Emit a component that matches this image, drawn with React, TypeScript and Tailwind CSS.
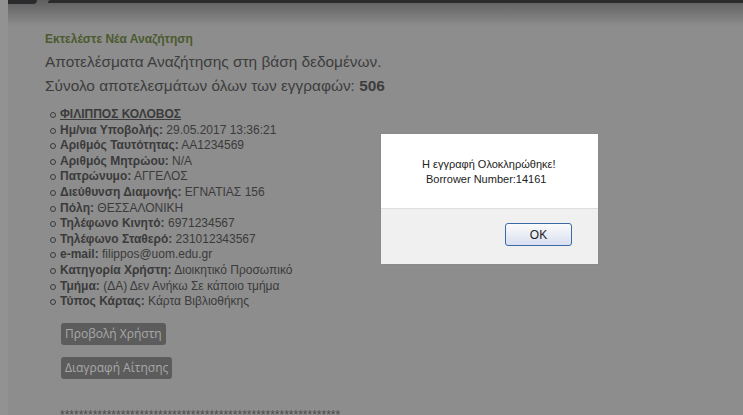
const FIELDS: { label: string; value: string }[] = [
  { label: 'Ημ/νια Υποβολής:', value: '29.05.2017 13:36:21' },
  { label: 'Αριθμός Ταυτότητας:', value: 'ΑΑ1234569' },
  { label: 'Αριθμός Μητρώου:', value: 'N/A' },
  { label: 'Πατρώνυμο:', value: 'ΑΓΓΕΛΟΣ' },
  { label: 'Διεύθυνση Διαμονής:', value: 'ΕΓΝΑΤΙΑΣ 156' },
  { label: 'Πόλη:', value: 'ΘΕΣΣΑΛΟΝΙΚΗ' },
  { label: 'Τηλέφωνο Κινητό:', value: '6971234567' },
  { label: 'Τηλέφωνο Σταθερό:', value: '231012343567' },
  { label: 'e-mail:', value: 'filippos@uom.edu.gr' },
  { label: 'Κατηγορία Χρήστη:', value: 'Διοικητικό Προσωπικό' },
  { label: 'Τμήμα:', value: '(ΔΑ) Δεν Ανήκω Σε κάποιο τμήμα' },
  { label: 'Τύπος Κάρτας:', value: 'Κάρτα Βιβλιοθήκης' },
];

function Bullet() {
  return <span className="mt-[5px] mr-[4px] w-[6px] h-[6px] rounded-full border border-[#3a3a3a] shrink-0" />;
}

export default function App() {
  return (
    <div className="relative w-[743px] h-[415px] overflow-hidden bg-[#8d8d8d] text-[#3b3b3b] font-['Liberation_Sans',Arial,sans-serif]">
      {/* top nav edge + shadow */}
      <div className="absolute inset-x-0 top-0 h-[26px] bg-gradient-to-b from-[#5f5f5f] to-[#8d8d8d]" />
      <div className="absolute left-0 top-0 w-[37px] h-[4px] bg-[#2b2b2d] rounded-br-[4px]" />
      <div className="absolute left-[48px] right-0 top-0 h-[3px] bg-[#2b2b2d] rounded-tl-[3px]" />
      <div className="absolute left-0 top-0 bottom-0 w-[8px] bg-[#929292]" />

      <div className="relative pl-[45px] pt-[32px]">
        <div className="text-[12px] font-bold text-[#4b5a2d] leading-[14px]">Εκτελέστε Νέα Αναζήτηση</div>
        <div className="mt-[4px] text-[15.4px] leading-[24px] text-[#3d3d3d]">Αποτελέσματα Αναζήτησης στη βάση δεδομένων.</div>
        <div className="text-[15.4px] leading-[24px] text-[#3d3d3d]">
          Σύνολο αποτελεσμάτων όλων των εγγραφών: <b>506</b>
        </div>

        <ul className="mt-[9px] pl-[5px] text-[12px] leading-[15.6px]">
          <li className="flex items-start">
            <Bullet />
            <b className="underline">ΦΙΛΙΠΠΟΣ ΚΟΛΟΒΟΣ</b>
          </li>
          {FIELDS.map((f) => (
            <li key={f.label} className="flex items-start">
              <Bullet />
              <span>
                <b>{f.label}</b> {f.value}
              </span>
            </li>
          ))}
        </ul>

        <div className="mt-[13px] pl-[16px] flex flex-col items-start gap-[12px] font-['Open_Sans',sans-serif] text-[12px]">
          <button className="h-[22px] px-[4px] rounded-[3px] bg-[#5c5c5c] text-[#a9a9a9]">Προβολή Χρήστη</button>
          <button className="h-[22px] px-[4px] rounded-[3px] bg-[#5c5c5c] text-[#a9a9a9]">Διαγραφή Αίτησης</button>
        </div>

        <div className="mt-[29px] pl-[15px] text-[12px] leading-[14px] text-[#4a4a4a] whitespace-nowrap">
          {'*'.repeat(60)}
        </div>
      </div>

      {/* alert dialog */}
      <div className="absolute left-[380px] top-[133px] w-[219px] h-[132px] border border-[#8a8a8a] bg-white flex flex-col text-[11px] text-[#222]">
        <div className="h-[74px] pt-[23px] pl-[41px] leading-[15px]">
          <div>Η εγγραφή Ολοκληρώθηκε!</div>
          <div className="pl-[4px]">Borrower Number:14161</div>
        </div>
        <div className="flex-1 bg-[#f0f0f0] border-t border-[#dfdfdf] flex justify-end items-start pt-[14px] pr-[26px]">
          <button className="w-[67px] h-[23px] rounded-[3px] border border-[#3c6aa6] bg-gradient-to-b from-[#fbfbfb] to-[#d9dff0] text-[12px] text-[#222]">
            OK
          </button>
        </div>
      </div>
    </div>
  );
}
